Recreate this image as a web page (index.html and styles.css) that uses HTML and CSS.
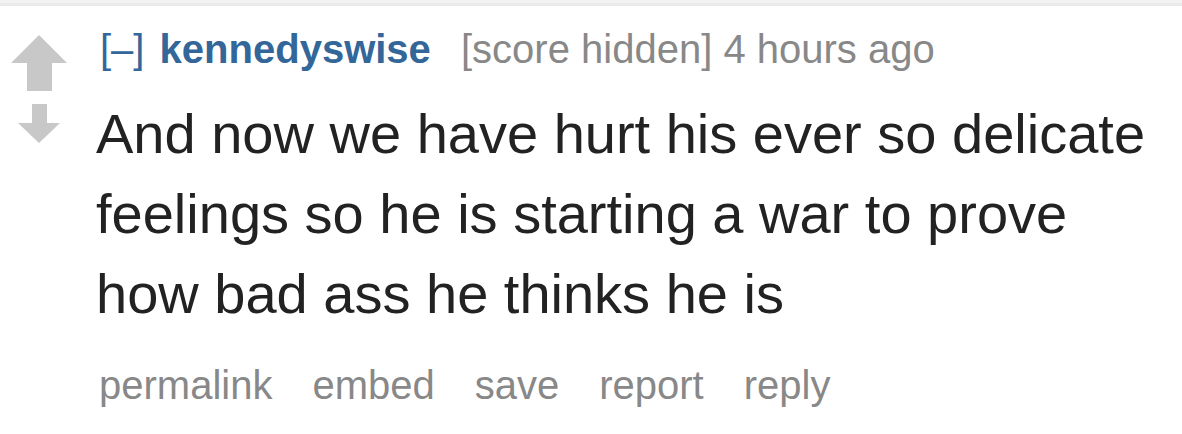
FILE: index.html
```html
<!DOCTYPE html>
<html lang="en">
<head>
    <meta charset="UTF-8">
    <meta name="viewport" content="width=device-width, initial-scale=1.0">
    <title>Comment</title>
    <link rel="stylesheet" href="styles.css">
</head>
<body>
    <div class="top-bar"></div>
    <div class="comment">
        <div class="midcol">
            <svg class="arrow up" width="56" height="56" viewBox="0 0 56 56">
                <polygon points="0,28 28,0 56,28 41,28 41,56 16,56 16,28"/>
            </svg>
            <svg class="arrow down" width="42" height="39" viewBox="0 0 42 39">
                <polygon points="14,0 29,0 29,19 42,19 21,39 0,19 14,19"/>
            </svg>
        </div>
        <div class="entry">
            <p class="tagline">
                <a class="expand" href="#">[–]</a>
                <a class="author" href="#">kennedyswise</a>
                <span class="score">[score hidden]</span> <time>4 hours ago</time>
            </p>
            <div class="md">
                <p>And now we have hurt his ever so delicate feelings so he is starting a war to prove how bad ass he thinks he is</p>
            </div>
            <ul class="buttons">
                <li><a href="#">permalink</a></li>
                <li><a href="#">embed</a></li>
                <li><a href="#">save</a></li>
                <li><a href="#">report</a></li>
                <li><a href="#">reply</a></li>
            </ul>
        </div>
    </div>
</body>
</html>
```

FILE: styles.css
```css
body {
    margin: 0;
    padding: 0;
    font-family: "Liberation Sans", Arial, sans-serif;
    background-color: #ffffff;
}
a {
    text-decoration: none;
}
.top-bar {
    height: 3px;
    background-color: #f3f3f3;
    border-bottom: 3px solid #eaeaea;
}
.comment {
    display: flex;
    padding-top: 20px;
}
.midcol {
    display: flex;
    flex-direction: column;
    align-items: center;
    width: 56px;
    margin-left: 11px;
    padding-top: 9px;
}
.arrow {
    display: block;
    fill: #c8c8c8;
}
.arrow.down {
    margin-top: 13px;
}
.entry {
    margin-left: 29px;
}
.tagline {
    margin: 0;
    padding-left: 4px;
    font-size: 40px;
    line-height: 46px;
    color: #888888;
}
.expand {
    color: #336699;
    margin-right: 4px;
}
.author {
    color: #336699;
    font-weight: bold;
    margin-right: 19px;
}
.md {
    margin-top: 22px;
    font-size: 56px;
    line-height: 80px;
    color: #222222;
}
.md p {
    margin: 0;
}
.buttons {
    display: flex;
    gap: 40px;
    list-style: none;
    margin: 28px 0 0 0;
    padding: 0 0 0 3px;
    font-size: 40px;
    line-height: 46px;
}
.buttons a {
    color: #888888;
}
```
